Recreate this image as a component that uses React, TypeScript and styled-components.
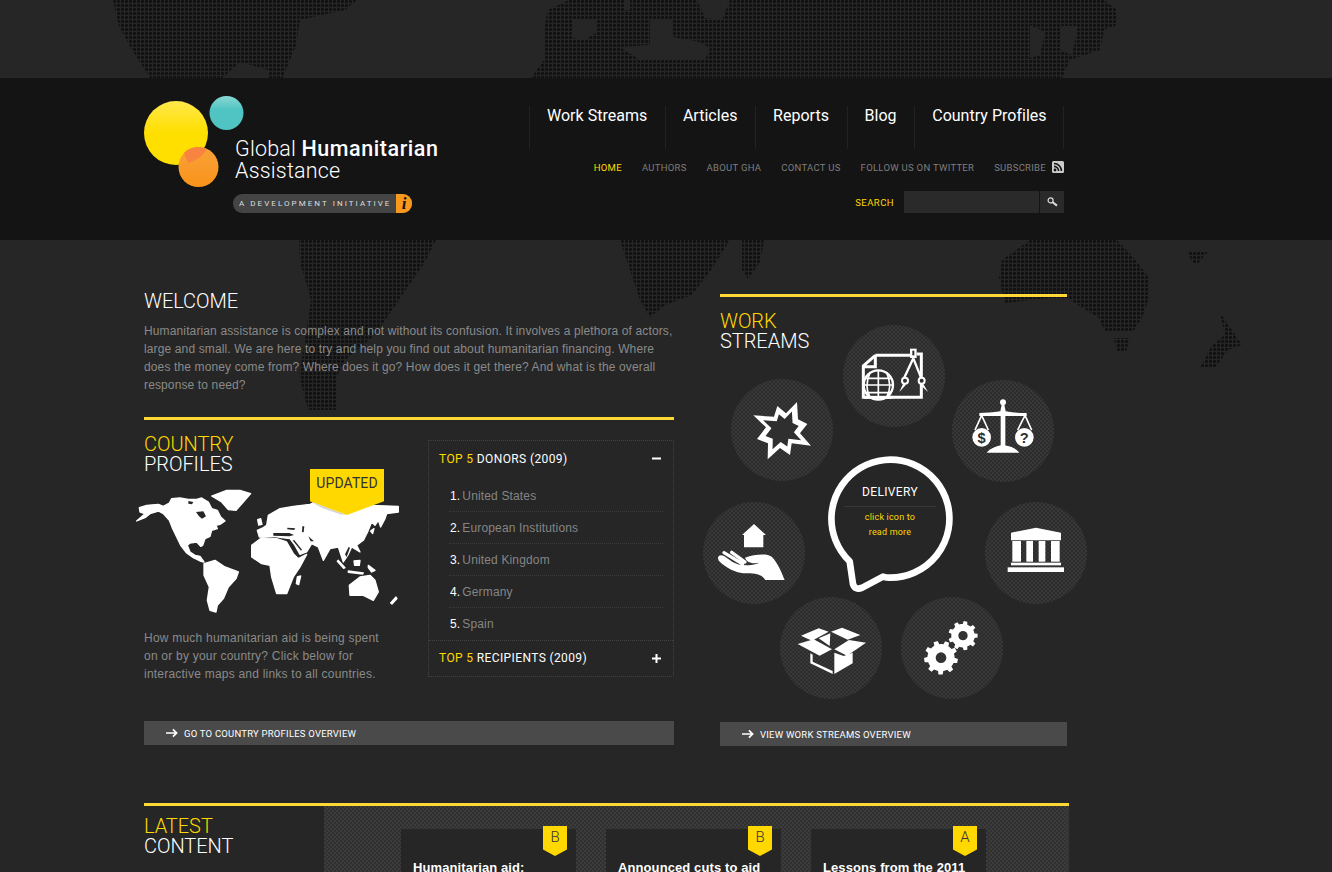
import React from "react";
import styled, { createGlobalStyle } from "styled-components";

const Global = createGlobalStyle`
  html, body { margin: 0; padding: 0; background: #262626; }
  * { box-sizing: border-box; }
  a { text-decoration: none; color: inherit; }
  ul, ol { list-style: none; margin: 0; padding: 0; }
`;

const din = `Roboto, "Liberation Sans", sans-serif`;
const arial = `"Liberation Sans", Arial, sans-serif`;
const yellow = "#ffd800";

const Page = styled.div`
  position: relative; height: 872px; overflow: hidden; background: #262626;
  font-family: ${din}; padding-top: 78px;
`;
const BgMap = styled.svg`position: absolute; left: 0; top: 0; width: 1332px; height: 872px; pointer-events: none;`;

const Header = styled.header`
  position: relative; height: 162px; background: #141414; padding: 0 268px 0 144px;
  display: flex; justify-content: space-between;
`;
const Logo = styled.a`display: flex; align-items: flex-start; padding-top: 18px;`;
const LogoMark = styled.svg`width: 100px; height: 92px; flex: none; margin-right: -9px;`;
const LogoText = styled.div`padding-top: 42px; color: #fff;`;
const LogoName = styled.div`font-size: 21.5px; line-height: 22px; font-weight: 300; letter-spacing: .2px; white-space: nowrap; strong { font-weight: 500; letter-spacing: .55px; }`;
const Pill = styled.div`
  display: flex; align-items: center; width: 179px; height: 19px; margin: 12px 0 0 -2px; background: #444;
  border-radius: 9px; overflow: hidden; padding-left: 6px; font-size: 8px; letter-spacing: 2.05px; color: #ddd; white-space: nowrap;
`;
const PillTab = styled.span`
  margin-left: auto; width: 16px; height: 19px; background: #f8981d; color: #141414; letter-spacing: 0;
  font: italic bold 17px "Liberation Serif", serif; text-align: center; line-height: 19px;
`;

const HeaderRight = styled.div`width: 535px; padding-top: 28px; display: flex; flex-direction: column; align-items: flex-end;`;
const MainNav = styled.nav`display: flex; border-right: 1px solid #222; width: 535px;`;
const MainNavItem = styled.a`
  height: 43px; border-left: 1px solid #222; padding: 0 17.6px 0 17px; font-size: 16px; line-height: 19px;
  font-weight: 400; color: #fff; letter-spacing: .02px; white-space: nowrap;
`;
const SubNav = styled.nav`display: flex; align-items: center; gap: 20px; margin-top: 11px; height: 14px;`;
const SubNavItem = styled.a<{ $active?: boolean }>`
  font-size: 9.5px; letter-spacing: .28px; text-transform: uppercase; white-space: nowrap;
  color: ${(p) => (p.$active ? yellow : "#7e7e7e")};
  display: flex; align-items: center; gap: 6px;
`;
const SearchForm = styled.div`display: flex; align-items: center; margin-top: 17px;`;
const SearchLabel = styled.span`font-size: 9.5px; letter-spacing: .45px; color: ${yellow}; margin-right: 10px;`;
const SearchInput = styled.div`width: 135px; height: 22px; background: #2a2a2a;`;
const SearchButton = styled.div`width: 24px; height: 22px; margin-left: 1px; background: #2a2a2a; display: flex; align-items: center; justify-content: center;`;

const Main = styled.main`position: relative; padding-left: 144px; width: 1100px;`;
const Columns = styled.div`display: flex; gap: 46px;`;
const LeftCol = styled.div`width: 530px; padding-top: 51px;`;
const RightCol = styled.div`width: 347px; padding-top: 54px;`;
const Rule = styled.div`height: 3px; background: #ffd835;`;
const Heading = styled.h2`
  margin: 0; font-size: 20px; line-height: 20px; font-weight: 300; color: #fff; letter-spacing: -.05px; text-transform: uppercase;
  span { display: block; color: ${yellow}; }
`;
const Body = styled.p`margin: 0; font: 12px/18px ${arial}; color: #8a8a8a; letter-spacing: .22px; white-space: nowrap;`;
const Intro = styled(Body)`margin: 11px 0 23px; letter-spacing: .13px;`;

const CountryRow = styled.div`display: flex; justify-content: space-between; margin: 14px 0 38px; height: 249px;`;
const CountryLeft = styled.div`position: relative; width: 280px;`;
const WorldMap = styled.svg`display: block; width: 273.33px; height: 126.67px; margin: 12.67px 0 16px -14px;`;
const UpdatedBadge = styled.div`
  position: absolute; left: 166px; top: 35px; width: 74px; height: 46px; background: ${yellow}; color: #333;
  clip-path: polygon(0 0, 100% 0, 100% 70%, 50% 100%, 0 70%);
  font-size: 14px; font-weight: 400; letter-spacing: .1px; text-align: center; padding-top: 6px; line-height: 17px;
`;
const Accordion = styled.div`width: 246px; height: 237px; margin-top: 6px; border: 1px dotted #414141;`;
const AccordionHead = styled.div<{ $divided?: boolean }>`
  height: 35px; display: flex; align-items: center; justify-content: space-between; padding: 0 12px 0 10px;
  border-top: ${(p) => (p.$divided ? "1px dotted #414141" : "none")};
  font-size: 12px; letter-spacing: .38px; color: #fff; white-space: nowrap;
  span span { color: ${yellow}; }
`;
const AccordionList = styled.ol`padding: 4px 10px 0 20px;`;
const AccordionItem = styled.li`
  height: 32px; display: flex; align-items: center; padding-left: 1px; font: 12px ${arial}; color: #858585; letter-spacing: .15px;
  border-bottom: 1px dotted #3c3c3c;
  &:last-child { border-bottom: none; }
  b { color: #fff; font-weight: 400; margin-right: 2px; }
`;
const LinkBar = styled.a`
  display: flex; align-items: center; gap: 6px; height: 24px; background: #4a4a4a; padding-left: 22px;
  font-size: 9.5px; color: #fff; text-transform: uppercase; white-space: nowrap; letter-spacing: .22px;
`;

const WorkPanel = styled.div`position: relative; height: 425px; padding-top: 14px;`;
const Node = styled.a<{ $x: number; $y: number }>`
  position: absolute; left: ${(p) => p.$x}px; top: ${(p) => p.$y}px; width: 102px; height: 102px; border-radius: 50%;
  background: repeating-conic-gradient(#2c2c2c 0 25%, #383838 0 50%) 0 0 / 4px 4px;
  svg { display: block; width: 102px; height: 102px; }
`;
const Bubble = styled.div`position: absolute; left: 107px; top: 159px; width: 126px; height: 136px; text-align: center;`;
const BubbleShape = styled.svg`position: absolute; left: 0; top: 0; width: 126px; height: 136px;`;
const BubbleText = styled.div`position: relative; padding: 29px 17px 0;`;
const BubbleTitle = styled.div`font-size: 12px; line-height: 15px; color: #fff; letter-spacing: .35px; border-bottom: 1px solid #383838; padding-bottom: 6px;`;
const BubbleHint = styled.div`font-size: 9px; line-height: 15px; color: ${yellow}; letter-spacing: .2px; padding-top: 3px;`;

const Latest = styled.section`width: 925px; margin-top: 57px;`;
const LatestBody = styled.div`display: flex;`;
const LatestHead = styled.div`width: 180px; padding-top: 10px;`;
const LatestPanel = styled.div`
  flex: 1; height: 120px; display: flex; gap: 30px; padding: 23px 0 0 77px;
  background: repeating-conic-gradient(#303030 0 25%, #3c3c3c 0 50%) 0 0 / 4px 4px;
`;
const Card = styled.article`position: relative; width: 175px; height: 200px; background: #262626; padding: 30px 12px 0;`;
const CardTitle = styled.h3`margin: 0; font: bold 13px/18px ${arial}; letter-spacing: .1px; color: #fff; white-space: nowrap;`;
const Grade = styled.div`
  position: absolute; right: 9px; top: -3px; width: 24px; height: 30px; background: ${yellow}; color: #333;
  clip-path: polygon(0 0, 100% 0, 100% 78%, 50% 100%, 0 78%);
  text-align: center; font: 15px/22px ${din}; font-weight: 300;
`;

const Dark = "#2f2f2f";

function gear(cx: number, cy: number, r: number, hole: number, teeth: number, rot = 0) {
  let d = "";
  const step = (Math.PI * 2) / teeth;
  for (let i = 0; i < teeth; i++) {
    const a = rot + i * step;
    const pts: [number, number][] = [
      [a - step * 0.5, r * 0.8], [a - step * 0.28, r * 0.8], [a - step * 0.18, r], [a + step * 0.18, r], [a + step * 0.28, r * 0.8],
    ];
    pts.forEach(([t, q]) => {
      d += `${d ? "L" : "M"}${(cx + Math.cos(t) * q).toFixed(1)},${(cy + Math.sin(t) * q).toFixed(1)} `;
    });
  }
  d += "Z ";
  d += `M${cx + hole},${cy} A${hole},${hole} 0 1 0 ${cx - hole},${cy} A${hole},${hole} 0 1 0 ${cx + hole},${cy} Z`;
  return d;
}

const Icon = ({ cx, cy, children }: { cx: number; cy: number; children: React.ReactNode }) => (
  <svg viewBox={`${cx - 153} ${cy - 153} 306 306`}>{children}</svg>
);

const burstPoints = "160,316 222,320 232,288 258,310 291,276 294,328 322,342 300,370 333,407 275,400 270,435 240,414 203,448 204,400 171,387 198,352";

const DocIcon = () => (
  <Icon cx={582} cy={198}>
    <g fill="none" stroke="#fff" strokeWidth="9">
      <path d="M526,136 L490,168 L490,262 L664,262 L664,132 L650,132 M526,136 L632,136 M526,136 L526,170 L490,170" />
      <circle cx="535" cy="225" r="44" fill={Dark} strokeWidth="7" />
      <path d="M535,181 V262 M510,188 C498,215 498,240 510,262 M560,188 C572,215 572,240 560,262 M491,225 H579 M497,205 H573 M497,248 H573" strokeWidth="5" />
      <path d="M492,262 H578" />
      <path d="M640,145 L612,205 M640,145 L664,205" strokeWidth="7" />
      <circle cx="615" cy="212" r="9" fill={Dark} strokeWidth="6" />
      <circle cx="665" cy="212" r="9" fill={Dark} strokeWidth="6" />
    </g>
    <rect x="630" y="116" width="20" height="28" fill="#fff" />
    <rect x="637" y="122" width="6" height="14" fill={Dark} />
    <path d="M610,220 L598,246 L618,224 Z M670,222 L684,246 L662,226 Z" fill="#fff" />
  </Icon>
);
const BurstIcon = () => (
  <Icon cx={246} cy={360}>
    <polygon points={burstPoints} fill="#fff" />
    <polygon points={burstPoints} fill={Dark} transform="translate(246 360) scale(.66) translate(-246 -360)" />
  </Icon>
);
const ScalesIcon = () => (
  <Icon cx={909} cy={363}>
    <g fill="#fff">
      <circle cx="909" cy="277" r="9" />
      <path d="M905,284 H913 L917,304 C940,308 960,309 980,309 V318 H838 V309 C858,309 878,308 901,304 Z" />
      <rect x="902" y="316" width="14" height="92" />
      <path d="M860,428 C872,414 890,408 905,406 H913 C930,408 946,414 958,428 Z" />
      <circle cx="845" cy="382" r="28" />
      <circle cx="973" cy="382" r="28" />
    </g>
    <path d="M845,316 L825,360 M845,316 L865,360 M975,316 L953,360 M975,316 L995,360" stroke="#fff" strokeWidth="5" fill="none" />
    <text x="845" y="398" textAnchor="middle" fontFamily={arial} fontWeight="700" fontSize="44" fill={Dark}>$</text>
    <text x="973" y="398" textAnchor="middle" fontFamily={arial} fontWeight="700" fontSize="44" fill={Dark}>?</text>
  </Icon>
);
const HandIcon = () => (
  <Icon cx={162} cy={189}>
    <polygon fill="#fff" points="162,102 198,135 190,135 190,172 132,172 132,135 126,135" />
    <path fill="#fff" d="M135,203 C165,193 200,190 215,200 C235,220 245,248 254,270 L196,270 C185,252 165,249 130,250 C105,247 78,234 58,214 C48,202 58,190 72,198 L98,216 C115,227 150,230 178,218 C160,222 140,218 135,203 Z" />
    <path d="M72,188 L128,222 M95,187 L135,216" stroke="#fff" strokeWidth="10" strokeLinecap="round" />
  </Icon>
);
const BankIcon = () => (
  <Icon cx={1007} cy={189}>
    <g fill="#fff">
      <polygon points="932,128 1007,113 1082,128 1082,151 932,151" />
      <rect x="936" y="153" width="26" height="62" />
      <rect x="978" y="153" width="20" height="62" />
      <rect x="1015" y="153" width="20" height="62" />
      <rect x="1052" y="153" width="26" height="62" />
      <rect x="932" y="218" width="150" height="8" />
      <rect x="922" y="232" width="169" height="14" />
    </g>
  </Icon>
);
const BoxIcon = () => (
  <Icon cx={392} cy={474}>
    <g fill="#fff">
      <polygon points="302,437 355,415 385,425 335,452" />
      <polygon points="392,425 425,413 480,435 442,449" />
      <polygon points="292,462 340,448 395,478 358,497" />
      <polygon points="497,458 440,497 402,478 446,450" />
      <polygon points="355,445 390,430 388,468" />
      <polygon points="402,488 430,498 457,488 457,520 402,552" />
      <polygon points="330,490 337,494 337,515 397,543 397,552 330,520" />
    </g>
  </Icon>
);
const GearsIcon = () => (
  <Icon cx={755} cy={474}>
    <path fill="#fff" fillRule="evenodd" d={gear(722, 503, 51, 16, 9, 0.2)} />
    <path fill="#fff" fillRule="evenodd" d={gear(788, 437, 44, 14, 9, 0)} />
  </Icon>
);

const nodes = [
  { x: 123, y: 28, icon: <DocIcon /> },
  { x: 11, y: 82, icon: <BurstIcon /> },
  { x: 232, y: 83, icon: <ScalesIcon /> },
  { x: -17, y: 205, icon: <HandIcon /> },
  { x: 265, y: 205, icon: <BankIcon /> },
  { x: 60, y: 300, icon: <BoxIcon /> },
  { x: 181, y: 300, icon: <GearsIcon /> },
];
const donors = ["United States", "European Institutions", "United Kingdom", "Germany", "Spain"];
const topLinks = ["Home", "Authors", "About GHA", "Contact us", "Follow us on Twitter"];
const mainLinks = ["Work Streams", "Articles", "Reports", "Blog", "Country Profiles"];
const cards = [
  { grade: "B", title: "Humanitarian aid:" },
  { grade: "B", title: "Announced cuts to aid" },
  { grade: "A", title: "Lessons from the 2011" },
];

const Arrow = () => (
  <svg width="12" height="10" viewBox="0 0 13 10">
    <path d="M0 5 H11 M7.5 1 L11.5 5 L7.5 9" fill="none" stroke="#fff" strokeWidth="1.8" />
  </svg>
);

export default function App() {
  return (
    <Page>
      <Global />
      <BgMap viewBox="0 0 1332 872">
        <defs>
          <pattern id="dots" width="4" height="4" patternUnits="userSpaceOnUse">
            <rect x="1" y="0" width="3" height="3" rx="1" fill="#111" />
          </pattern>
        </defs>
        <path fill="url(#dots)" d="M113,0 L357,0 L345,10 L300,20 L296,45 L290,60 L281,82 L269,82 L268,70 L240,62 L222,78 L221,82 L153,82 L132,50 L119,26 Z" />
        <path fill="url(#dots)" fillRule="evenodd" d="M569,0 L1104,0 L1117,10 L1117,25 L1104,30 L1100,50 L1070,60 L1060,82 L528,82 L544,60 L544,30 L548,10 Z
          M573,20 L597,20 L597,32 L585,40 L573,38 Z
          M620,47 L650,45 L650,20 L673,20 L673,37 L700,42 L710,48 L705,60 L640,60 Z
          M624,0 L630,0 L630,10 L624,10 Z M697,0 L730,0 L722,20 L705,18 Z
          M1030,25 L1045,32 L1040,55 L1030,58 Z M1060,26 L1078,26 L1072,55 L1060,50 Z" />
        <path fill="url(#dots)" d="M299,240 L436,240 L425,262 L399,300 L375,335 L345,360 L336,378 L336,410 L308,410 L299,375 L305,340 L311,300 L300,262 Z" />
        <path fill="url(#dots)" d="M620,240 L730,240 L711,270 L692,295 L665,305 L650,317 L640,300 L630,270 Z M742,240 L764,240 L760,262 L748,279 L742,270 Z" />
        <path fill="url(#dots)" d="M1030,240 L1117,240 L1136,260 L1149,278 L1149,298 L1142,318 L1133,332 L1105,332 L1099,318 L1067,298 L1049,298 L1005,303 L999,278 L1002,260 Z M1114,338 L1130,338 L1126,352 L1117,352 Z" />
        <path fill="url(#dots)" d="M1220,313 L1232,330 L1242,345 L1228,350 L1215,368 L1200,368 L1212,345 L1225,335 Z M1187,252 L1208,252 L1204,256 L1197,265 L1192,262 Z" />
      </BgMap>

      <Header>
        <Logo href="#">
          <LogoMark viewBox="0 0 100 92">
            <defs>
              <linearGradient id="y" x1="0" y1="0" x2="0" y2="1"><stop offset="0" stopColor="#ffe84a" /><stop offset=".5" stopColor="#ffdf00" /></linearGradient>
              <linearGradient id="t" x1="0" y1="0" x2="0" y2="1"><stop offset="0" stopColor="#8ad8d4" /><stop offset=".4" stopColor="#50c4c2" /></linearGradient>
              <linearGradient id="o" x1="0" y1="0" x2="0" y2="1"><stop offset="0" stopColor="#f7a23a" /><stop offset="1" stopColor="#fa931a" /></linearGradient>
            </defs>
            <circle cx="32" cy="37" r="32" fill="url(#y)" />
            <circle cx="82.5" cy="17" r="17" fill="url(#t)" />
            <circle cx="54.5" cy="71" r="20" fill="url(#o)" />
            <path d="M40,57 A20,20 0 0 1 63,53 A32,32 0 0 1 44,67 Z" fill="#f8843f" />
          </LogoMark>
          <LogoText>
            <LogoName>Global <strong>Humanitarian</strong></LogoName>
            <LogoName>Assistance</LogoName>
            <Pill>A DEVELOPMENT INITIATIVE<PillTab>i</PillTab></Pill>
          </LogoText>
        </Logo>
        <HeaderRight>
          <MainNav>
            {mainLinks.map((l) => <MainNavItem key={l} href="#">{l}</MainNavItem>)}
          </MainNav>
          <SubNav>
            {topLinks.map((l, i) => <SubNavItem key={l} $active={i === 0} href="#">{l}</SubNavItem>)}
            <SubNavItem href="#">
              Subscribe
              <svg width="12" height="12" viewBox="0 0 12 12">
                <rect width="12" height="12" rx="1.5" fill="#ccc" />
                <circle cx="3" cy="9" r="1.4" fill="#141414" />
                <path d="M2 5.4 A4.6 4.6 0 0 1 6.6 10 M2 2.5 A7.5 7.5 0 0 1 9.5 10" fill="none" stroke="#141414" strokeWidth="1.6" />
              </svg>
            </SubNavItem>
          </SubNav>
          <SearchForm>
            <SearchLabel>SEARCH</SearchLabel>
            <SearchInput />
            <SearchButton>
              <svg width="11" height="10" viewBox="0 0 11 10">
                <circle cx="3.6" cy="3.4" r="2.5" fill="none" stroke="#ddd" strokeWidth="1.2" />
                <path d="M5.6 5.2 L10 8.6" stroke="#ddd" strokeWidth="2" />
              </svg>
            </SearchButton>
          </SearchForm>
        </HeaderRight>
      </Header>

      <Main>
        <Columns>
          <LeftCol>
            <Heading>Welcome</Heading>
            <Intro>
              Humanitarian assistance is complex and not without its confusion. It involves a plethora of actors,<br />
              large and small. We are here to try and help you find out about humanitarian financing. Where<br />
              does the money come from? Where does it go? How does it get there? And what is the overall<br />
              response to need?
            </Intro>
            <Rule />
            <CountryRow>
              <CountryLeft>
                <Heading><span>Country</span>Profiles</Heading>
                <WorldMap viewBox="0 170 820 380">
                  <g fill="#fff" stroke="#fff" strokeWidth="4" strokeLinejoin="round">
                    <path d="M28,232 L50,225 L85,222 L100,228 L118,218 L125,205 L150,203 L175,207 L200,207 L215,203 L235,215 L245,235 L262,240 L272,260 L285,272 L270,282 L258,285 L262,295 L245,300 L240,318 L225,325 L218,345 L212,348 L200,335 L180,338 L172,345 L180,365 L195,375 L210,378 L222,395 L210,392 L190,382 L170,368 L152,345 L140,320 L128,295 L118,270 L100,250 L85,242 L60,250 L45,262 L20,272 L45,250 L30,245 Z" />
                    <path d="M245,197 L290,180 L330,180 L362,190 L340,215 L318,240 L295,238 L275,215 Z" />
                    <path d="M222,400 L255,390 L285,410 L325,425 L318,445 L295,470 L280,505 L262,525 L258,545 L240,540 L232,510 L238,470 L222,435 Z" />
                    <path d="M382,300 L400,292 L410,285 L415,255 L450,235 L490,228 L540,222 L560,212 L650,220 L720,225 L805,228 L805,245 L770,250 L765,265 L752,290 L745,270 L735,285 L725,275 L715,300 L700,330 L680,345 L690,365 L665,350 L655,372 L640,395 L625,350 L600,355 L580,390 L565,350 L545,340 L530,365 L510,372 L495,345 L480,325 L455,322 L430,318 L388,320 Z" />
                    <path d="M365,345 L395,322 L440,325 L470,335 L490,370 L505,385 L530,372 L510,410 L490,440 L470,490 L440,490 L425,440 L420,405 L395,400 L365,380 Z" />
                    <path d="M658,465 L690,440 L720,435 L735,450 L745,485 L730,510 L700,495 L660,495 Z" />
                    <path d="M502,440 L512,437 L506,463 L499,460 Z M383,268 L392,265 L396,282 L386,284 Z M782,518 L798,500 L801,505 L786,521 Z" />
                    <path d="M625,390 L645,412 L641,414 L622,393 Z M655,422 L700,428 L698,431 L655,426 Z M672,392 L690,390 L688,405 L674,405 Z M715,405 L735,420 L725,425 L715,412 Z M722,302 L732,295 L728,310 Z" />
                  </g>
                  <polygon points="540,212 650,254 630,252 575,232" fill="#d4d4d4" />
                  <g fill="#262626">
                    <path d="M198,245 L220,243 L228,258 L216,265 L207,258 Z M175,212 L190,215 L186,222 L175,220 Z" />
                    <path d="M430,308 L478,308 L492,314 L478,318 L430,316 Z M472,292 L496,294 L492,299 L472,297 Z M492,328 L516,358 L513,361 L489,331 Z M535,318 L552,333 L542,333 Z M517,288 L523,288 L521,306 L516,305 Z" />
                    <path d="M645,372 L656,350 L660,352 L650,380 Z" />
                  </g>
                </WorldMap>
                <UpdatedBadge>UPDATED</UpdatedBadge>
                <Body>
                  How much humanitarian aid is being spent<br />
                  on or by your country? Click below for<br />
                  interactive maps and links to all countries.
                </Body>
              </CountryLeft>
              <Accordion>
                <AccordionHead>
                  <span><span>TOP 5</span> DONORS (2009)</span>
                  <svg width="9" height="9" viewBox="0 0 9 9"><rect y="3.5" width="9" height="2" fill="#fff" /></svg>
                </AccordionHead>
                <AccordionList>
                  {donors.map((d, i) => (
                    <AccordionItem key={d}><b>{i + 1}.</b>{d}</AccordionItem>
                  ))}
                </AccordionList>
                <AccordionHead $divided>
                  <span><span>TOP 5</span> RECIPIENTS (2009)</span>
                  <svg width="9" height="9" viewBox="0 0 9 9"><path d="M0 3.5 H3.5 V0 H5.5 V3.5 H9 V5.5 H5.5 V9 H3.5 V5.5 H0 Z" fill="#fff" /></svg>
                </AccordionHead>
              </Accordion>
            </CountryRow>
            <LinkBar href="#"><Arrow />Go to country profiles overview</LinkBar>
          </LeftCol>

          <RightCol>
            <Rule />
            <WorkPanel>
              <Heading><span>Work</span>Streams</Heading>
              {nodes.map((n) => (
                <Node key={`${n.x}-${n.y}`} $x={n.x} $y={n.y} href="#">{n.icon}</Node>
              ))}
              <Bubble>
                <BubbleShape viewBox="384 -102 378 408">
                  <path
                    d="M552,260 C560,262 565,263 571,263 A177,177 0 1 0 452,214 L462,282 Q468,302 490,293 Z"
                    fill="#262626" stroke="#fff" strokeWidth="20" strokeLinejoin="round"
                  />
                </BubbleShape>
                <BubbleText>
                  <BubbleTitle>DELIVERY</BubbleTitle>
                  <BubbleHint>click icon to<br />read more</BubbleHint>
                </BubbleText>
              </Bubble>
            </WorkPanel>
            <LinkBar href="#"><Arrow />View work streams overview</LinkBar>
          </RightCol>
        </Columns>

        <Latest>
          <Rule />
          <LatestBody>
            <LatestHead>
              <Heading><span>Latest</span>Content</Heading>
            </LatestHead>
            <LatestPanel>
              {cards.map((c) => (
                <Card key={c.title}>
                  <Grade>{c.grade}</Grade>
                  <CardTitle>{c.title}</CardTitle>
                </Card>
              ))}
            </LatestPanel>
          </LatestBody>
        </Latest>
      </Main>
    </Page>
  );
}
